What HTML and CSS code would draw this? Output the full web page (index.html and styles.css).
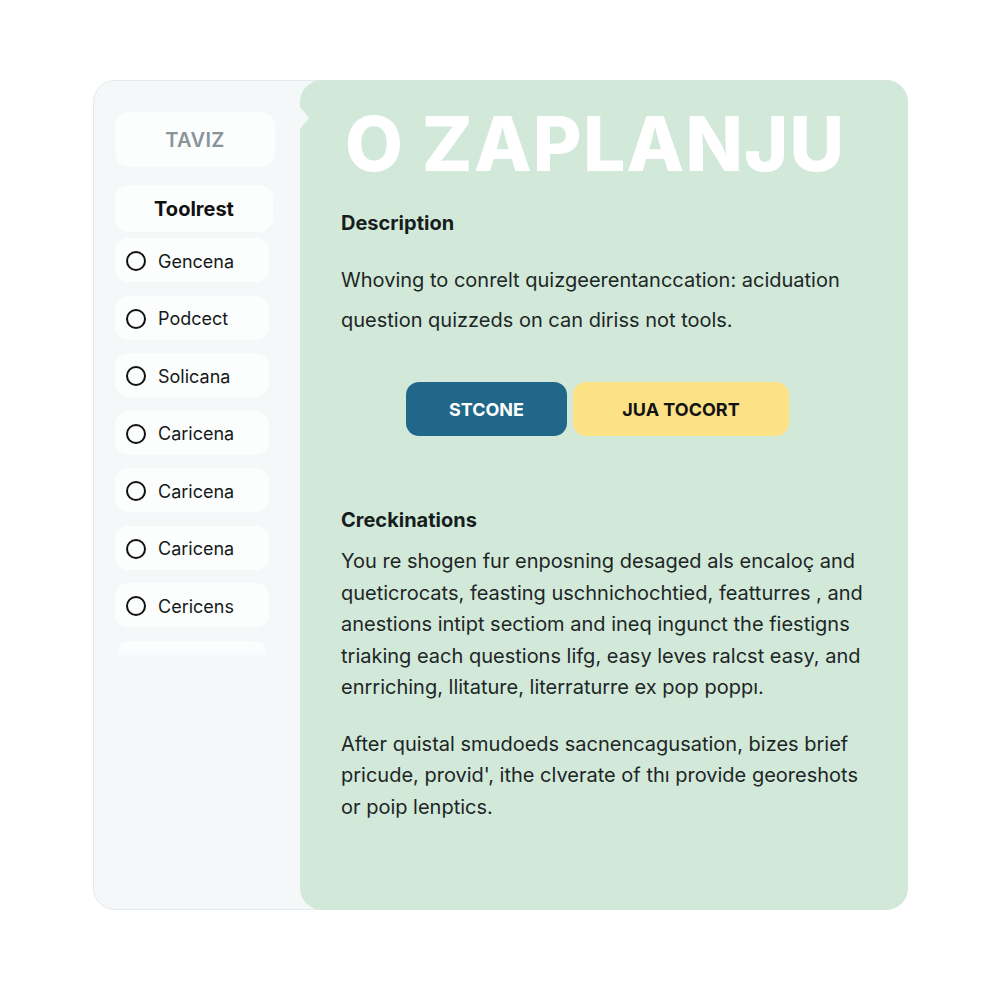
FILE: index.html
```html
<!DOCTYPE html>
<html>
<head>
<meta charset="utf-8">
<link rel="stylesheet" href="styles.css">
</head>
<body>
<div class="card">
  <aside class="sidebar">
    <div class="brand">TAVIZ</div>
    <div class="section">Toolrest</div>
    <ul class="options">
      <li class="opt"><span class="radio"></span>Gencena</li>
      <li class="opt"><span class="radio"></span>Podcect</li>
      <li class="opt"><span class="radio"></span>Solicana</li>
      <li class="opt"><span class="radio"></span>Caricena</li>
      <li class="opt"><span class="radio"></span>Caricena</li>
      <li class="opt"><span class="radio"></span>Caricena</li>
      <li class="opt"><span class="radio"></span>Cericens</li>
      <li class="opt-fade"></li>
    </ul>
  </aside>
  <main class="panel">
    <h1 class="title">O ZAPLANJU</h1>
    <h2 class="heading h-desc">Description</h2>
    <p class="lead">Whoving to conrelt quizgeerentanccation: aciduation<br>question quizzeds on can diriss not tools.</p>
    <div class="actions">
      <button class="btn btn-primary">STCONE</button>
      <button class="btn btn-accent">JUA TOCORT</button>
    </div>
    <h2 class="heading h-check">Creckinations</h2>
    <p class="body">You re shogen fur enposning desaged als encaloç and<br>queticrocats, feasting uschnichochtied, featturres , and<br>anestions intipt sectiom and ineq ingunct the fiestigns<br>triaking each questions lifg, easy leves ralcst easy, and<br>enrriching, llitature, literraturre ex pop poppı.</p>
    <p class="body body-last">After quistal smudoeds sacnencagusation, bizes brief<br>pricude, provid', ithe clverate of thı provide georeshots<br>or poip lenptics.</p>
  </main>
</div>
</body>
</html>
```

FILE: styles.css
```css
* { box-sizing: border-box; }
html, body { margin: 0; padding: 0; background: #ffffff; }
body { font-family: Inter, "Noto Sans", sans-serif; color: #1c2624; }

.card {
  width: 815px;
  height: 830px;
  margin: 80px 0 0 93px;
  display: flex;
  background: #f5f8f9;
  border: 1px solid #e4eaeb;
  border-radius: 22px;
}

.sidebar {
  width: 206px;
  flex: none;
  padding: 31px 0 0 21px;
  display: flex;
  flex-direction: column;
  overflow: hidden;
}

.brand {
  width: 160px;
  height: 55px;
  background: #fcfdfd;
  border-radius: 14px;
  display: flex;
  align-items: center;
  justify-content: center;
  font-size: 20px;
  font-weight: 600;
  color: #8a949b;
  letter-spacing: 0.4px;
}

.section {
  width: 158px;
  height: 47px;
  margin-top: 18px;
  background: #fcfdfd;
  border-radius: 14px;
  display: flex;
  align-items: center;
  justify-content: center;
  font-size: 20px;
  font-weight: 700;
  color: #111;
}

.options {
  list-style: none;
  margin: 6px 0 0 0;
  padding: 0;
  display: flex;
  flex-direction: column;
  gap: 13.5px;
}

.opt {
  width: 154px;
  height: 44px;
  background: #fcfdfd;
  border-radius: 13px;
  display: flex;
  align-items: center;
  padding-left: 11px;
  padding-top: 2px;
  font-size: 18px;
  color: #141a1a;
}

.radio {
  width: 20px;
  height: 20px;
  border: 2px solid #111;
  border-radius: 50%;
  margin-right: 12px;
  flex: none;
}

.opt-fade {
  width: 150px;
  height: 16px;
  margin-left: 2px;
  border-radius: 12px 12px 0 0;
  background: linear-gradient(#fcfdfd, #fbfcfd 55%, #f5f8f9);
}

.panel {
  position: relative;
  flex: 1;
  margin: -1px -1px -1px 0;
  background: #d2e9da;
  border-radius: 22px;
  padding: 27px 30px 0 41px;
  display: flex;
  flex-direction: column;
  align-items: flex-start;
}

.panel::before {
  content: "";
  position: absolute;
  left: 0;
  top: 27px;
  border-left: 9px solid #f5f8f9;
  border-top: 11px solid transparent;
  border-bottom: 11px solid transparent;
}

.title {
  margin: 0 0 0 4px;
  font-size: 75px;
  line-height: 74px;
  font-weight: 800;
  color: #ffffff;
  letter-spacing: 1.2px;
  white-space: nowrap;
}

.heading {
  margin: 0;
  font-size: 20px;
  line-height: 24px;
  font-weight: 700;
  color: #161d1c;
}

.h-desc { margin-top: 30px; }

.lead {
  margin: 25px 0 0 0;
  font-size: 20px;
  line-height: 40px;
  color: #1d2625;
  white-space: nowrap;
}

.actions {
  margin: 42px 0 0 65px;
  display: flex;
  gap: 6px;
}

.btn {
  height: 54px;
  border: none;
  border-radius: 13px;
  font-family: Inter, "Noto Sans", sans-serif;
  font-size: 18px;
  font-weight: 700;
  padding: 0;
}

.btn-primary {
  width: 161px;
  background: #21678a;
  color: #ffffff;
}

.btn-accent {
  width: 216px;
  background: #fde185;
  color: #141414;
}

.h-check { margin-top: 72px; }

.body {
  margin: 14px 0 0 0;
  font-size: 20px;
  line-height: 31.5px;
  color: #1d2625;
  white-space: nowrap;
}

.body-last { margin-top: 25px; }
```
